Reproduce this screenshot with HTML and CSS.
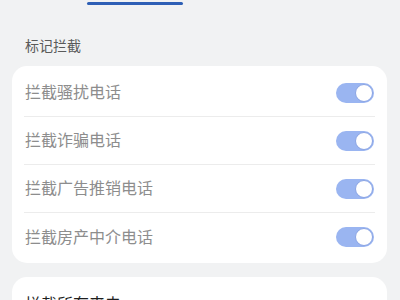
FILE: index.html
```html
<!DOCTYPE html>
<html lang="zh">
<head>
<meta charset="utf-8">
<link rel="stylesheet" href="styles.css">
</head>
<body>
<div class="tabs"><div class="indicator"></div></div>
<div class="section-title">标记拦截</div>
<div class="card">
  <div class="row"><span class="label">拦截骚扰电话</span><span class="switch"><span class="knob"></span></span></div>
  <div class="row"><span class="label">拦截诈骗电话</span><span class="switch"><span class="knob"></span></span></div>
  <div class="row"><span class="label">拦截广告推销电话</span><span class="switch"><span class="knob"></span></span></div>
  <div class="row"><span class="label">拦截房产中介电话</span><span class="switch"><span class="knob"></span></span></div>
</div>
<div class="card card2">
  <div class="row"><span class="label dark">拦截所有来电</span></div>
</div>
</body>
</html>
```
FILE: styles.css
```css
html, body {
  margin: 0;
  padding: 0;
  background: #f1f2f3;
  font-family: "Noto Sans CJK SC", "Noto Sans", sans-serif;
  overflow: hidden;
}
.tabs {
  height: 2px;
  padding-left: 87px;
  padding-top: 2px;
}
.indicator {
  width: 96px;
  height: 3px;
  background: #2e5fb5;
  border-radius: 2px;
}
.section-title {
  margin: 31px 0 0 25px;
  font-size: 14px;
  line-height: 20px;
  color: #5a5a5a;
}
.card {
  margin: 11px 13px 0 12px;
  background: #fff;
  border-radius: 15px;
  padding: 3px 12px 2px;
}
.row {
  display: flex;
  align-items: center;
  justify-content: space-between;
  height: 48px;
  box-sizing: border-box;
  border-bottom: 1px solid #ececec;
}
.label {
  font-size: 16px;
  color: #8d8d8d;
  padding-left: 1px;
  padding-bottom: 3px;
}
.row:last-child {
  border-bottom: none;
}
.label.dark {
  color: #1e1e1e;
}
.switch {
  position: relative;
  width: 38px;
  height: 20px;
  border-radius: 10px;
  background: #9ab5f1;
  margin-right: 1px;
}
.knob {
  position: absolute;
  right: 1px;
  top: 1px;
  width: 16px;
  height: 16px;
  border-radius: 50%;
  background: #fff;
  border: 1px solid #8aa4e4;
}
.card2 {
  margin-top: 14px;
}
```
